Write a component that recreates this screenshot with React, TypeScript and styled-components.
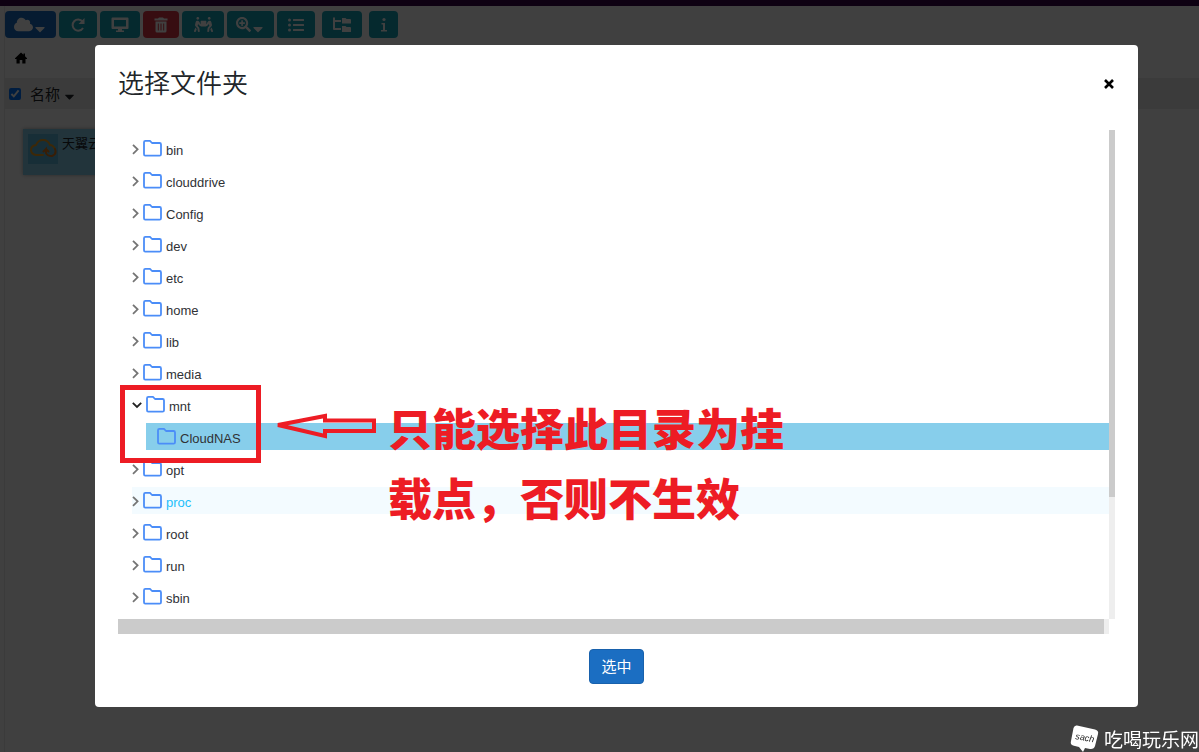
import React, { useState } from "react";
import styled, { createGlobalStyle } from "styled-components";
import {
  FaCloud,
  FaCaretDown,
  FaPeopleCarry,
  FaSearchPlus,
  FaListUl,
} from "react-icons/fa";

const sans = `"Liberation Sans", "Noto Sans CJK SC", sans-serif`;
const cjk = `"Noto Sans CJK SC", sans-serif`;

const GlobalStyle = createGlobalStyle`
  *, *::before, *::after { box-sizing: border-box; }
  body { margin: 0; background: #fff; font-family: ${sans}; color: #212529; }
  button { font: inherit; cursor: pointer; }
  html, body { overflow: hidden; }
`;

const Page = styled.div`
  min-height: 100vh;
  overflow: hidden;
`;

const TopBar = styled.div`
  height: 6px;
  background: #3a0647;
`;

const Workspace = styled.main`
  min-height: calc(100vh - 6px);
  margin-left: 4px;
  border-left: 1px solid #ececec;
`;

const Toolbar = styled.div`
  display: flex;
  gap: 3px;
  padding-top: 5px;
`;

const tones = { primary: "#1b6ec2", info: "#17a2b8", danger: "#dc3545" };

const ToolButton = styled.button<{ $tone: keyof typeof tones; $width: number; $gap?: number }>`
  display: flex;
  align-items: center;
  justify-content: center;
  width: ${(p) => p.$width}px;
  height: 27px;
  margin-left: ${(p) => p.$gap ?? 0}px;
  padding: 0;
  border: 0;
  border-radius: 4px;
  background: ${(p) => tones[p.$tone]};
  color: #fff;
  font-size: 16px;

  svg + svg {
    align-self: flex-end;
    margin: 0 0 1px -1px;
  }
`;

const Breadcrumb = styled.nav`
  display: flex;
  align-items: center;
  height: 40px;
  padding-left: 10px;

  a {
    display: flex;
    color: #000;
  }
`;

const ListHeader = styled.div`
  display: flex;
  align-items: center;
  height: 31px;
  padding-left: 4px;
  background: #ececec;
  font: 15px/30px ${cjk};

  input {
    width: 12px;
    height: 12px;
    margin: 0 7px 0 0;
    accent-color: #0075ff;
  }

  label {
    display: flex;
    align-items: center;
    gap: 2px;
    height: 29px;
  }

  svg {
    margin-top: 6px;
  }
`;

const FileCard = styled.div`
  display: flex;
  gap: 4px;
  width: 240px;
  height: 46px;
  margin: 20px 18px;
  padding: 5px;
  background: #87ceeb;
  box-shadow: 0 0 4px #aaa;
  font: 13px/17px ${cjk};
`;

const FileThumb = styled.svg`
  width: 30px;
  height: 30px;
  background: #5bb8dc;
`;

const Backdrop = styled.div`
  position: fixed;
  inset: 0;
  display: flex;
  align-items: flex-start;
  padding: 45px 61px 0 95px;
  background: rgba(0, 0, 0, 0.75);
`;

const Dialog = styled.section`
  flex: 1;
  min-width: 0;
  padding: 0 23px 23px;
  border-radius: 4px;
  background: #fff;
`;

const DialogHeader = styled.header`
  display: flex;
  align-items: center;
  justify-content: space-between;
  height: 85px;
  padding-bottom: 8px;

  h2 {
    margin: 0;
    padding-bottom: 4px;
    font: 350 26px ${cjk};
  }
`;

const CloseButton = styled.button`
  display: flex;
  padding: 0;
  border: 0;
  background: none;
`;

const TreeFrame = styled.div`
  position: relative;
  display: grid;
  grid-template-columns: minmax(0, 1fr) 6px;
  grid-template-rows: 65vh 15px;
`;

const Tree = styled.ul`
  margin: 0;
  padding: 5px 0 0 14px;
  overflow: hidden;
  list-style: none;
  font-size: 13px;
`;

const Branch = styled.ul`
  margin: 0;
  padding: 0 0 0 14px;
  list-style: none;
`;

const Row = styled.button<{ $state?: "selected" | "hover"; $leaf?: boolean }>`
  display: flex;
  align-items: center;
  gap: 4px;
  width: 100%;
  height: 27px;
  margin-bottom: 5px;
  padding: 0;
  padding-left: ${(p) => (p.$leaf ? 11 : 0)}px;
  border: 0;
  background: ${(p) =>
    p.$state === "selected" ? "#87ceeb" : p.$state === "hover" ? "#f3fbff" : "transparent"};
  color: ${(p) => (p.$state === "hover" ? "#1ebffb" : "#303236")};
  text-align: left;

  span {
    padding-top: 3px;
  }
`;

const Track = styled.div`
  background: #eee;
`;

const VerticalThumb = styled.div`
  height: 75%;
  background: #cbcbcb;
`;

const HorizontalThumb = styled.div`
  height: 100%;
  margin-right: 5px;
  background: #cbcbcb;
`;

const DialogFooter = styled.footer`
  display: flex;
  justify-content: center;
  padding-top: 15px;
`;

const ConfirmButton = styled.button`
  height: 35px;
  padding: 0 11px 2px;
  border: 1px solid #1861ac;
  border-radius: 4px;
  background: #1b6ec2;
  color: #fff;
  font: 15px ${cjk};
`;

const Highlight = styled.div`
  position: absolute;
  top: 255px;
  left: 2px;
  width: 141px;
  height: 78px;
  border: 5px solid #ed1c24;
  pointer-events: none;
`;

const Arrow = styled.svg`
  position: absolute;
  top: 281px;
  left: 155px;
  width: 104px;
  height: 28px;
`;

const Note = styled.p`
  position: absolute;
  top: 262px;
  left: 270px;
  margin: 0;
  color: #ed1c24;
  font: 900 44px/70px ${cjk};
  white-space: nowrap;
  pointer-events: none;
`;

const Watermark = styled.div`
  position: fixed;
  right: 0;
  bottom: 0;
  display: flex;
  align-items: center;
  gap: 5px;
  height: 27px;
  color: #fff;
  font: 19px ${cjk};
`;

const RefreshIcon = () => (
  <svg width="16" height="16" viewBox="0 0 16 16" fill="none" stroke="currentColor" strokeWidth="2" aria-hidden>
    <path d="M12.500 4.500A5.600 5.600 0 1 0 13 11" />
    <path d="M14.500 1V7H8.500Z" fill="currentColor" stroke="none" />
  </svg>
);

const DesktopIcon = () => (
  <svg width="18" height="16" viewBox="0 0 18 16" fill="currentColor" aria-hidden>
    <path fillRule="evenodd" d="M1.500 0.500H16.500Q17.500 0.500 17.500 1.500V11Q17.500 12 16.500 12H1.500Q0.500 12 0.500 11V1.500Q0.500 0.500 1.500 0.500ZM3 3V9.500H15V3Z" />
    <path d="M7 12H11V13.500H13V15H5V13.500H7Z" />
  </svg>
);

const TrashIcon = () => (
  <svg width="14" height="16" viewBox="0 0 14 16" fill="currentColor" aria-hidden>
    <path d="M0.500 1.500H4L5 0.500H9L10 1.500H13.500V3.500H0.500Z" />
    <path fillRule="evenodd" d="M1.500 4.500H12.500V14Q12.500 15.500 11 15.500H3Q1.500 15.500 1.500 14ZM3.800 6.500V13.500H4.800V6.500ZM6.500 6.500V13.500H7.500V6.500ZM9.200 6.500V13.500H10.200V6.500Z" />
  </svg>
);

const InfoIcon = () => (
  <svg width="8" height="16" viewBox="0 0 8 16" fill="currentColor" aria-hidden>
    <circle cx="4" cy="2.500" r="1.600" />
    <path d="M1.500 6H5V13H7V14.500H1V13H3V7.500H1.500Z" />
  </svg>
);

const HomeIcon = () => (
  <svg width="12" height="12" viewBox="0 0 12 12" fill="currentColor" aria-hidden>
    <path d="M6 0.500L8.500 2.800V1.500H10V4.200L12 6.200V7H10.500V11.500H7.300V8H4.700V11.500H1.500V7H0V6.200Z" />
  </svg>
);

const FolderTreeIcon = () => (
  <svg width="18" height="16" viewBox="0 0 18 16" fill="currentColor" aria-hidden>
    <path d="M0 0.500H2V3H8V5H2V11H8V13H1Q0 13 0 12Z" />
    <path d="M9 1H12.5L13.5 2H17Q18 2 18 3V6.5H9Z" />
    <path d="M9 9H12.5L13.5 10H17Q18 10 18 11V15H9Z" />
  </svg>
);

const FolderIcon = () => (
  <svg width="19" height="18" viewBox="0 0 19 18" fill="none" stroke="#4b8df8" strokeWidth="1.8" strokeLinejoin="round" aria-hidden>
    <path d="M1 14.3V2.3Q1 0.900 2.4 0.900H7L9 3H16.6Q18 3 18 4.400V14.2Q18 15.600 16.6 15.600H2.2Q1 15.600 1 14.3Z" />
  </svg>
);

const Chevron = ({ open }: { open: boolean }) =>
  open ? (
    <svg width="10" height="8" viewBox="0 0 10 8" fill="none" stroke="#222" strokeWidth="1.8" aria-hidden>
      <path d="M0.8 1.8L5 6L9.2 1.8" />
    </svg>
  ) : (
    <svg width="7" height="12" viewBox="0 0 7 12" fill="none" stroke="#757575" strokeWidth="1.8" aria-hidden>
      <path d="M1 1.8L5.6 6.3L1 10.8" />
    </svg>
  );

type Folder = { name: string; children?: string[] };

const folders: Folder[] = [
  { name: "bin" },
  { name: "clouddrive" },
  { name: "Config" },
  { name: "dev" },
  { name: "etc" },
  { name: "home" },
  { name: "lib" },
  { name: "media" },
  { name: "mnt", children: ["CloudNAS"] },
  { name: "opt" },
  { name: "proc" },
  { name: "root" },
  { name: "run" },
  { name: "sbin" },
];

export default function App() {
  const [selected, setSelected] = useState("CloudNAS");

  return (
    <>
      <GlobalStyle />
      <Page>
        <TopBar />
        <Workspace>
          <Toolbar>
            <ToolButton $tone="primary" $width={51} aria-label="Cloud"><FaCloud size={19} /><FaCaretDown /></ToolButton>
            <ToolButton $tone="info" $width={38} aria-label="Refresh"><RefreshIcon /></ToolButton>
            <ToolButton $tone="info" $width={40} aria-label="Desktop"><DesktopIcon /></ToolButton>
            <ToolButton $tone="danger" $width={36} aria-label="Delete"><TrashIcon /></ToolButton>
            <ToolButton $tone="info" $width={42} aria-label="Move"><FaPeopleCarry size={19} /></ToolButton>
            <ToolButton $tone="info" $width={47} aria-label="Zoom"><FaSearchPlus size={15} /><FaCaretDown /></ToolButton>
            <ToolButton $tone="info" $width={38} aria-label="List"><FaListUl /></ToolButton>
            <ToolButton $tone="info" $width={40} $gap={4} aria-label="Tree"><FolderTreeIcon /></ToolButton>
            <ToolButton $tone="info" $width={29} $gap={4} aria-label="Info"><InfoIcon /></ToolButton>
          </Toolbar>
          <Breadcrumb>
            <a href="#home" aria-label="Home"><HomeIcon /></a>
          </Breadcrumb>
          <ListHeader>
            <label>
              <input type="checkbox" defaultChecked />
              名称
              <FaCaretDown />
            </label>
          </ListHeader>
          <FileCard>
            <FileThumb viewBox="0 0 30 30" fill="none" strokeWidth="2" strokeLinecap="round" aria-hidden>
              <path d="M15 21H8Q3 20 3 16Q3 12 8 11Q10 6 15 6Q20 6 22 11Q25 11 27 15" stroke="#f0a020" />
              <path d="M27 15Q29 20 24 22Q19 22 18 19V15L15.500 17.500M18 15L20.500 17.500" stroke="#e07818" />
            </FileThumb>
            天翼云盘
          </FileCard>
        </Workspace>
      </Page>

      <Backdrop>
        <Dialog role="dialog" aria-modal="true" aria-labelledby="dialog-title">
          <DialogHeader>
            <h2 id="dialog-title">选择文件夹</h2>
            <CloseButton aria-label="Close">
              <svg width="12" height="12" viewBox="0 0 12 12" stroke="#000" strokeWidth="2.6" aria-hidden>
                <path d="M2 2L10 10M10 2L2 10" />
              </svg>
            </CloseButton>
          </DialogHeader>

          <TreeFrame>
            <Tree>
              {folders.map((folder) => (
                <li key={folder.name}>
                  <Row
                    $state={folder.name === "proc" ? "hover" : folder.name === selected ? "selected" : undefined}
                    onClick={() => setSelected(folder.name)}
                  >
                    <Chevron open={Boolean(folder.children)} />
                    <FolderIcon />
                    <span>{folder.name}</span>
                  </Row>
                  {folder.children && (
                    <Branch>
                      {folder.children.map((name) => (
                        <li key={name}>
                          <Row $leaf $state={name === selected ? "selected" : undefined} onClick={() => setSelected(name)}>
                            <FolderIcon />
                            <span>{name}</span>
                          </Row>
                        </li>
                      ))}
                    </Branch>
                  )}
                </li>
              ))}
            </Tree>
            <Track><VerticalThumb /></Track>
            <Track><HorizontalThumb /></Track>
            <Highlight />
            <Arrow viewBox="0 0 104 28" fill="none" stroke="#ed1c24" strokeWidth="4" aria-hidden>
              <path d="M5 14L52 5V9.500H101V20H52V25Z" />
            </Arrow>
            <Note>
              只能选择此目录为挂
              <br />
              载点，否则不生效
            </Note>
          </TreeFrame>

          <DialogFooter>
            <ConfirmButton>选中</ConfirmButton>
          </DialogFooter>
        </Dialog>
      </Backdrop>

      <Watermark>
        <svg width="29" height="27" viewBox="0 0 29 27" aria-hidden>
          <path d="M7 0.500L25 4.500Q29 5.500 28 9L25 21Q24 24.500 20 24L15 23L13 27L9 22L3 20.500Q0 19.500 1 16L3.500 3Q4.500 0 7 0.500Z" fill="#fff" />
          <text x="5" y="14" transform="rotate(10 5 14)" fontFamily="Liberation Sans" fontStyle="italic" fontSize="9" fill="#222">sach</text>
        </svg>
        吃喝玩乐网
      </Watermark>
    </>
  );
}
